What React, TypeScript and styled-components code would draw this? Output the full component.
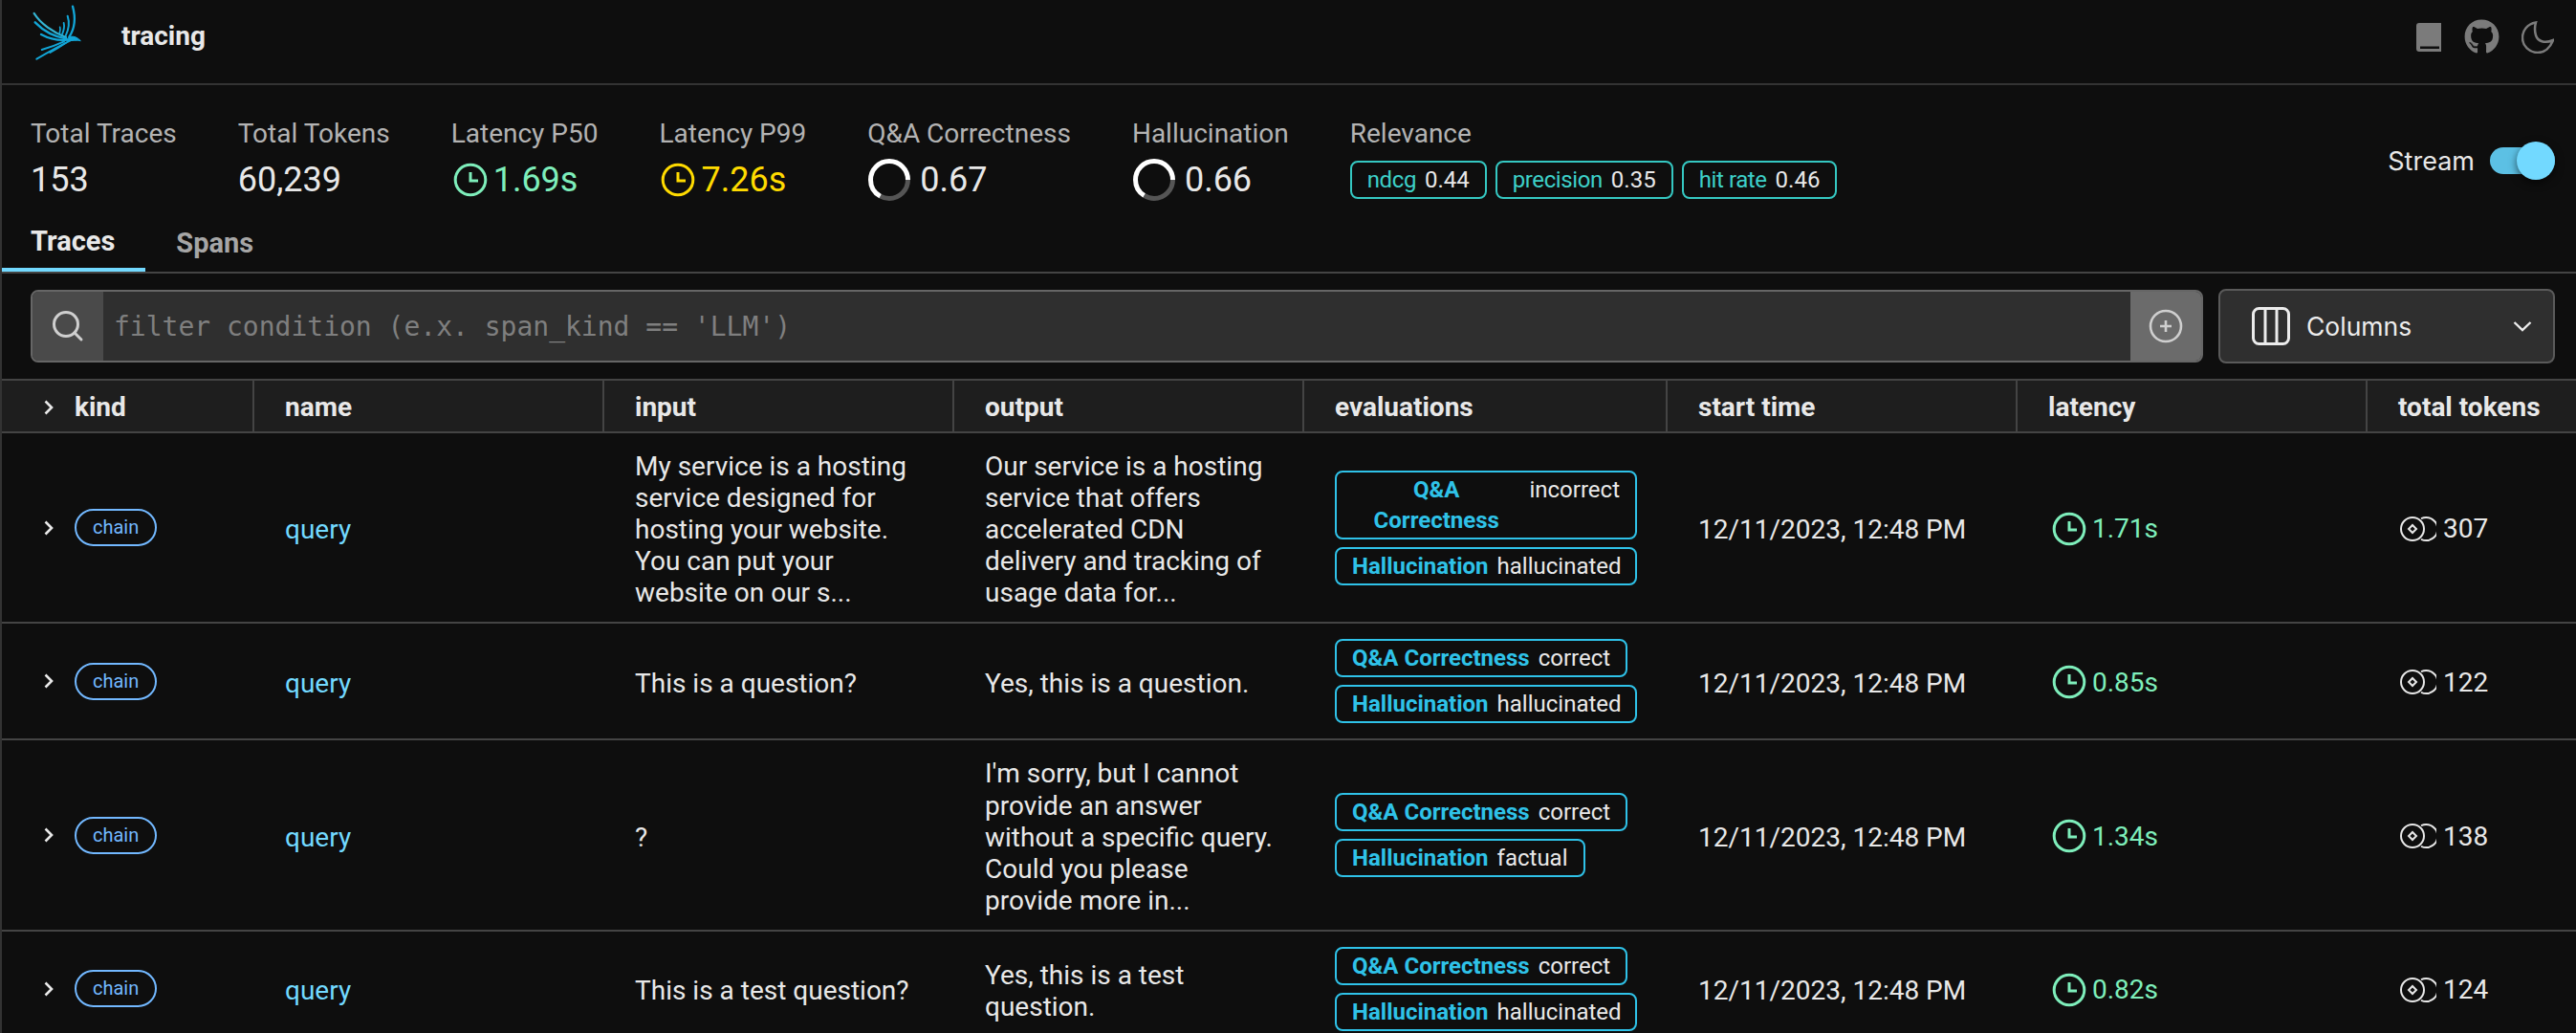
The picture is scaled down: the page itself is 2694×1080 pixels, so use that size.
import React from 'react';
import styled, { createGlobalStyle } from 'styled-components';
import { FaGithub } from 'react-icons/fa';

type Evaluation = { name: string; value: string };
type Trace = {
  input: string;
  output: string;
  evaluations: Evaluation[];
  latency: string;
  tokens: number;
};

const traces: Trace[] = [
  {
    input:
      'My service is a hosting service designed for hosting your website. You can put your website on our s...',
    output:
      'Our service is a hosting service that offers accelerated CDN delivery and tracking of usage data for...',
    evaluations: [
      { name: 'Q&A Correctness', value: 'incorrect' },
      { name: 'Hallucination', value: 'hallucinated' },
    ],
    latency: '1.71s',
    tokens: 307,
  },
  {
    input: 'This is a question?',
    output: 'Yes, this is a question.',
    evaluations: [
      { name: 'Q&A Correctness', value: 'correct' },
      { name: 'Hallucination', value: 'hallucinated' },
    ],
    latency: '0.85s',
    tokens: 122,
  },
  {
    input: '?',
    output:
      "I'm sorry, but I cannot provide an answer without a specific query. Could you please provide more in...",
    evaluations: [
      { name: 'Q&A Correctness', value: 'correct' },
      { name: 'Hallucination', value: 'factual' },
    ],
    latency: '1.34s',
    tokens: 138,
  },
  {
    input: 'This is a test question?',
    output: 'Yes, this is a test question.',
    evaluations: [
      { name: 'Q&A Correctness', value: 'correct' },
      { name: 'Hallucination', value: 'hallucinated' },
    ],
    latency: '0.82s',
    tokens: 124,
  },
];

const columns = ['name', 'input', 'output', 'evaluations', 'start time', 'latency', 'total tokens'];

const GlobalStyle = createGlobalStyle`
  html, body {
    margin: 0;
    height: 100%;
    overflow: hidden;
    background: #0e0e0e;
  }
  * {
    box-sizing: border-box;
  }
`;

const Main = styled.main`
  height: 1080px;
  overflow: hidden;
  border-left: 2px solid #333;
  background: #0e0e0e;
  color: #e8e8e8;
  font-family: Roboto, 'Liberation Sans', sans-serif;
  font-size: 28px;
`;

const Header = styled.header`
  display: flex;
  align-items: center;
  height: 89px;
  padding: 0 23px;
  border-bottom: 2px solid #333;
`;

const Logo = styled.svg`
  width: 70px;
  height: 70px;
  align-self: flex-start;
  margin-right: 32px;
`;

const Title = styled.span`
  font-weight: 700;
  font-size: 28px;
  margin-top: -12px;
`;

const HeaderIcons = styled.div`
  display: flex;
  align-items: center;
  margin-left: auto;
  margin-top: -10px;
  color: #7b7b7b;
`;

const HeaderIcon = styled.span<{ $gap: number }>`
  display: flex;
  margin-left: ${(props) => props.$gap}px;
`;

const Stats = styled.section`
  display: flex;
  align-items: center;
  padding: 31px 22px 8px 30px;
`;

const StatList = styled.div`
  display: flex;
  gap: 64px;
`;

const StatLabel = styled.div`
  color: #b3b3b3;
  line-height: 40px;
`;

const StatValue = styled.div<{ $color?: string }>`
  display: flex;
  align-items: center;
  gap: 4px;
  height: 56px;
  font-size: 36px;
  color: ${(props) => props.$color || '#e8e8e8'};
`;

const TagRow = styled.div`
  display: flex;
  gap: 9px;
  align-items: center;
  height: 56px;
`;

const StreamToggle = styled.div`
  display: flex;
  align-items: center;
  gap: 16px;
  margin-left: auto;
  font-family: Inter, 'Liberation Sans', sans-serif;
  font-size: 27px;
`;

const Track = styled.div`
  display: flex;
  justify-content: flex-end;
  align-items: center;
  width: 68px;
  height: 28px;
  border-radius: 14px;
  background: #5cc0e4;
`;

const Thumb = styled.div`
  width: 40px;
  height: 40px;
  border-radius: 50%;
  background: #72d9ff;
  box-shadow: 0 3px 8px rgba(0, 0, 0, 0.6);
`;

const Tabs = styled.nav`
  display: flex;
  height: 62px;
  border-bottom: 2px solid #444;
`;

const Tab = styled.div<{ $active?: boolean }>`
  display: flex;
  align-items: center;
  height: 60px;
  margin-left: ${(props) => (props.$active ? '-2px' : '0')};
  padding: 2px 32px 2px 32px;
  font-weight: 700;
  font-size: 29px;
  color: ${(props) => (props.$active ? '#e8e8e8' : '#a6a6a6')};
  border-bottom: ${(props) => (props.$active ? '4px solid #72d9ff' : 'none')};
`;

const Toolbar = styled.div`
  display: flex;
  gap: 16px;
  padding: 16px 22px 16px 30px;
`;

const SearchBox = styled.div`
  display: flex;
  flex: 1;
  height: 76px;
  margin-top: 1px;
  overflow: hidden;
  border: 2px solid #666;
  border-radius: 8px;
  background: #2f2f2f;
`;

const SearchAddon = styled.div<{ $bg: string }>`
  display: flex;
  align-items: center;
  justify-content: center;
  width: 74px;
  background: ${(props) => props.$bg};
  color: #cfcfcf;
`;

const Placeholder = styled.div`
  display: flex;
  flex: 1;
  align-items: center;
  padding-left: 11px;
  font-family: 'DejaVu Sans Mono', 'Liberation Mono', monospace;
  color: #7f7f7f;
`;

const ColumnsButton = styled.div`
  display: flex;
  align-items: center;
  gap: 17px;
  width: 352px;
  height: 78px;
  padding: 0 22px 0 33px;
  border: 2px solid #5a5a5a;
  border-radius: 8px;
  background: #2f2f2f;
  font-family: Inter, 'Liberation Sans', sans-serif;
  font-size: 26.5px;
  color: #ececec;
`;

const ChevronDown = styled.svg`
  margin-left: auto;
`;

const Row = styled.div`
  display: grid;
  grid-template-columns: 264px 366px 366px 366px 380px 366px 366px 1fr;
  border-bottom: 2px solid #444;
`;

const HeadRow = styled(Row)`
  height: 57px;
  border-top: 2px solid #444;
  background: #1e1e1e;
`;

const HeadCell = styled.div`
  display: flex;
  align-items: center;
  padding: 2px 0 0 32px;
  font-weight: 700;
  font-size: 28px;
  border-right: 2px solid #444;
  &:first-child {
    gap: 22px;
    padding-left: 44px;
  }
  &:last-child {
    border-right: none;
  }
`;

const Cell = styled.div`
  display: flex;
  align-items: center;
  padding: 16px 32px;
  line-height: 33.1px;
  &:first-child {
    gap: 22px;
    padding-left: 44px;
    padding-right: 0;
  }
`;

// roboto sits a little higher here than in the screenshot, nudge without changing row height
const CellText = styled.div`
  margin-top: 2px;
  margin-bottom: -2px;
`;

const KindBadge = styled.span`
  display: flex;
  align-items: center;
  height: 39px;
  padding: 0 17px;
  border: 2px solid #72b8ff;
  border-radius: 20px;
  color: #72b8ff;
  font-size: 20px;
`;

const NameLink = styled.a`
  color: #72d9ff;
`;

const EvalStack = styled.div`
  display: flex;
  flex-direction: column;
  align-items: flex-start;
  gap: 8px;
`;

const Tag = styled.div<{ $color: string }>`
  display: flex;
  gap: 9px;
  max-width: 316px;
  padding: 2px 16px;
  border: 2px solid ${(props) => props.$color};
  border-radius: 8px;
  font-size: 24px;
  line-height: 32px;
  white-space: nowrap;
`;

const TagName = styled.span<{ $color: string; $bold?: boolean }>`
  flex-shrink: 1;
  white-space: normal;
  text-align: center;
  color: ${(props) => props.$color};
  font-weight: ${(props) => (props.$bold ? 700 : 400)};
  letter-spacing: ${(props) => (props.$bold ? '0' : '-0.4px')};
`;

const TagValue = styled.span`
  flex-shrink: 0;
  color: #e8e8e8;
`;

const IconText = styled.div<{ $color?: string; $gap: number }>`
  display: flex;
  align-items: center;
  gap: ${(props) => props.$gap}px;
  margin-top: 1px;
  margin-bottom: -1px;
  padding-left: 2px;
  color: ${(props) => props.$color || 'inherit'};
`;

const ChevronRight = () => (
  <svg width="10" height="16" viewBox="0 0 10 16" fill="none" stroke="#e8e8e8" strokeWidth="2.6">
    <path d="M1.5 1.5 8 8l-6.5 6.5" />
  </svg>
);

const ClockIcon = () => (
  <svg width="40" height="40" viewBox="0 0 40 40" fill="none" stroke="currentColor" strokeWidth="3">
    <circle cx="20" cy="20" r="15.8" />
    <path d="M20 12v9h8" strokeWidth="3" />
  </svg>
);

const TokensIcon = () => (
  <svg width="38" height="28" viewBox="0 0 38 28" fill="none" stroke="#e8e8e8" strokeWidth="2">
    <circle cx="13" cy="14" r="12" />
    <path d="M22 3.200a12 12 0 1 1 0 21.600" />
    <path d="M13 10l4 4-4 4-4-4z" />
  </svg>
);

const Donut = ({ value }: { value: number }) => (
  <svg width="46" height="46" viewBox="0 0 46 46" fill="none" strokeWidth="5" style={{ marginRight: 5 }}>
    <circle cx="23" cy="23" r="19.5" stroke="#555" pathLength={100} strokeDasharray={`${(1 - value) * 100} 100`} />
    <circle
      cx="23"
      cy="23"
      r="19.5"
      stroke="#fff"
      pathLength={100}
      strokeDasharray={`${value * 100} 100`}
      strokeDashoffset={-(1 - value) * 100}
    />
  </svg>
);

const RelevanceTag = ({ name, value }: { name: string; value: string }) => (
  <Tag $color="#35c8c2">
    <TagName $color="#3dd0c8">{name}</TagName>
    <TagValue>{value}</TagValue>
  </Tag>
);

const App = () => {
  return (
    <Main>
      <GlobalStyle />
      <Header>
        <Logo viewBox="0 0 210 210" fill="none" stroke="#12a5d6" strokeLinecap="round">
          <path d="M32 42C52 74 92 102 132 117" strokeWidth="7" stroke="#35b4d2" />
          <path d="M35 70C62 98 100 116 134 122" strokeWidth="7" />
          <path d="M54 108C80 122 110 128 138 125" strokeWidth="7" />
          <path d="M153 20C164 60 158 92 142 116" strokeWidth="7" />
          <path d="M137 50C144 72 140 94 131 112" strokeWidth="6" />
          <path d="M125 72C128 84 125 96 120 108" strokeWidth="5.500" />
          <path d="M113 85C115 92 114 98 112 104" strokeWidth="5" />
          <path d="M40 185C76 164 116 142 150 125" strokeWidth="6" />
          <path d="M56 156C78 150 100 142 126 130" strokeWidth="5.500" />
          <path d="M82 165C98 156 114 146 132 134" strokeWidth="5.500" />
          <path d="M140 118C152 110 166 116 178 128C166 125 152 128 138 128Z" fill="#12a5d6" strokeWidth="3" />
        </Logo>
        <Title>tracing</Title>
        <HeaderIcons>
          <HeaderIcon $gap={0}>
            <svg width="26" height="30" viewBox="0 0 26 30" fill="currentColor">
              <path d="M3 0h23v30H3a3 3 0 0 1-3-3V3a3 3 0 0 1 3-3zm1 24.500v2.500h20v-2.500z" fillRule="evenodd" />
            </svg>
          </HeaderIcon>
          <HeaderIcon $gap={24}>
            <FaGithub size={37} />
          </HeaderIcon>
          <HeaderIcon $gap={23}>
            <svg width="34" height="34" viewBox="0 0 34 34" fill="none" stroke="currentColor" strokeWidth="2.5">
              <path d="M15 1.500C6 3 1 10 1 17.500 1 26 8 33 17 33c7 0 13-5 16-13-9 4-16 1-18-5-1.500-5-1-10 0-13.500z" />
            </svg>
          </HeaderIcon>
        </HeaderIcons>
      </Header>
      <Stats>
        <StatList>
          <div>
            <StatLabel>Total Traces</StatLabel>
            <StatValue>153</StatValue>
          </div>
          <div>
            <StatLabel>Total Tokens</StatLabel>
            <StatValue>60,239</StatValue>
          </div>
          <div>
            <StatLabel>Latency P50</StatLabel>
            <StatValue $color="#7eeebb">
              <ClockIcon />
              1.69s
            </StatValue>
          </div>
          <div>
            <StatLabel>Latency P99</StatLabel>
            <StatValue $color="#ffdb00">
              <ClockIcon />
              7.26s
            </StatValue>
          </div>
          <div>
            <StatLabel>Q&amp;A Correctness</StatLabel>
            <StatValue>
              <Donut value={0.67} />
              0.67
            </StatValue>
          </div>
          <div>
            <StatLabel>Hallucination</StatLabel>
            <StatValue>
              <Donut value={0.66} />
              0.66
            </StatValue>
          </div>
          <div>
            <StatLabel>Relevance</StatLabel>
            <TagRow>
              <RelevanceTag name="ndcg" value="0.44" />
              <RelevanceTag name="precision" value="0.35" />
              <RelevanceTag name="hit rate" value="0.46" />
            </TagRow>
          </div>
        </StatList>
        <StreamToggle>
          Stream
          <Track>
            <Thumb />
          </Track>
        </StreamToggle>
      </Stats>
      <Tabs>
        <Tab $active>Traces</Tab>
        <Tab>Spans</Tab>
      </Tabs>
      <Toolbar>
        <SearchBox>
          <SearchAddon $bg="#4a4a4a">
            <svg width="34" height="34" viewBox="0 0 34 34" fill="none" stroke="currentColor" strokeWidth="3">
              <circle cx="15" cy="15" r="12.500" />
              <path d="M24 24l7 7" strokeLinecap="round" />
            </svg>
          </SearchAddon>
          <Placeholder>filter condition (e.x. span_kind == 'LLM')</Placeholder>
          <SearchAddon $bg="#6b6b6b">
            <svg width="36" height="36" viewBox="0 0 36 36" fill="none" stroke="currentColor" strokeWidth="2.6">
              <circle cx="18" cy="18" r="16" />
              <path d="M18 12v12M12 18h12" />
            </svg>
          </SearchAddon>
        </SearchBox>
        <ColumnsButton>
          <svg width="40" height="40" viewBox="0 0 40 40" fill="none" stroke="currentColor" strokeWidth="3">
            <rect x="1.500" y="1.500" width="37" height="37" rx="6" />
            <path d="M14 2v36M26 2v36" />
          </svg>
          Columns
          <ChevronDown width="20" height="12" viewBox="0 0 20 12" fill="none" stroke="currentColor" strokeWidth="2.4">
            <path d="M1.500 2 10 10l8.500-8" />
          </ChevronDown>
        </ColumnsButton>
      </Toolbar>
      <HeadRow>
        <HeadCell>
          <ChevronRight />
          kind
        </HeadCell>
        {columns.map((col) => (
          <HeadCell key={col}>{col}</HeadCell>
        ))}
      </HeadRow>
      {traces.map((trace, i) => (
        <Row key={i}>
          <Cell>
            <ChevronRight />
            <KindBadge>chain</KindBadge>
          </Cell>
          <Cell>
            <CellText>
              <NameLink>query</NameLink>
            </CellText>
          </Cell>
          <Cell>
            <CellText>{trace.input}</CellText>
          </Cell>
          <Cell>
            <CellText>{trace.output}</CellText>
          </Cell>
          <Cell>
            <EvalStack>
              {trace.evaluations.map((ev) => (
                <Tag key={ev.name} $color="#2fc2e8">
                  <TagName $color="#2fc2e8" $bold>
                    {ev.name}
                  </TagName>
                  <TagValue>{ev.value}</TagValue>
                </Tag>
              ))}
            </EvalStack>
          </Cell>
          <Cell>
            <CellText>12/11/2023, 12:48 PM</CellText>
          </Cell>
          <Cell>
            <IconText $color="#7eeebb" $gap={4}>
              <ClockIcon />
              {trace.latency}
            </IconText>
          </Cell>
          <Cell>
            <IconText $gap={7}>
              <TokensIcon />
              {trace.tokens}
            </IconText>
          </Cell>
        </Row>
      ))}
    </Main>
  );
};

export default App;
